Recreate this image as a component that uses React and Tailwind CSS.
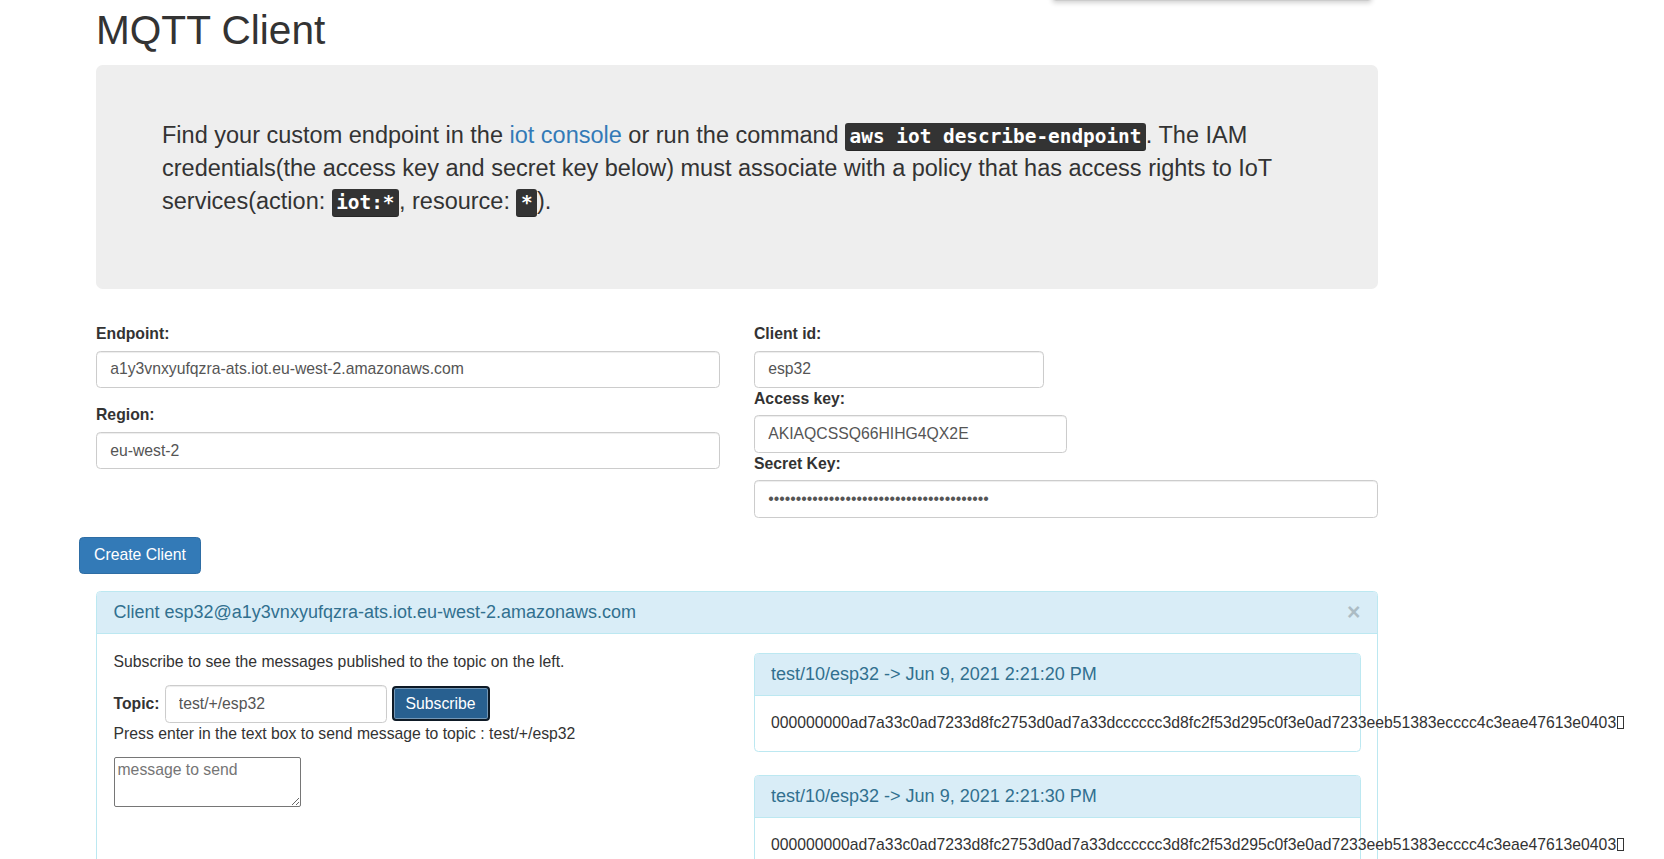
import React from 'react';

const PAYLOAD =
  '000000000ad7a33c0ad7233d8fc2753d0ad7a33dcccccc3d8fc2f53d295c0f3e0ad7233eeb51383ecccc4c3eae47613e0403';

const messages = [
  { id: 1, topic: 'test/10/esp32', time: 'Jun 9, 2021 2:21:20 PM', payload: PAYLOAD },
  { id: 2, topic: 'test/10/esp32', time: 'Jun 9, 2021 2:21:30 PM', payload: PAYLOAD },
];

function Kbd({ children }) {
  return (
    <kbd className="inline-block rounded-[3px] bg-[#333] px-[4.4px] py-[3px] font-['DejaVu_Sans_Mono',monospace] text-[19.4px] leading-[22px] font-bold text-white shadow-[inset_0_-1px_0_rgba(0,0,0,0.25)]">
      {children}
    </kbd>
  );
}

function Label({ children }) {
  return <label className="mb-[5.5px] block font-bold">{children}</label>;
}

function Input({ value, type = 'text', className = '' }) {
  return (
    <input
      type={type}
      defaultValue={value}
      className={`block h-[37.4px] rounded-[4.4px] border border-[#ccc] bg-white px-[13.2px] text-[#555] shadow-[inset_0_1px_1px_rgba(0,0,0,0.075)] outline-none ${className}`}
    />
  );
}

function MessagePanel({ msg }) {
  return (
    <div className="mb-[23px] rounded-[4.4px] border border-[#bce8f1]">
      <div className="flex h-[42px] items-center rounded-t-[3.4px] border-b border-[#bce8f1] bg-[#d9edf7] px-[16.5px] text-[18px] text-[#31708f]">
        {msg.topic} -&gt; {msg.time}
      </div>
      <div className="whitespace-nowrap px-[16.5px] py-[16.5px]">
        {msg.payload}
        <span className="ml-[1px] inline-block h-[13px] w-[7px] border border-[#333] align-[-1px]" />
      </div>
    </div>
  );
}

export default function App() {
  return (
    <div className="relative min-h-screen overflow-x-hidden bg-white font-['Liberation_Sans',Arial,sans-serif] text-[15.75px] leading-[22px] text-[#333]">
      <div className="absolute left-[1052px] top-[-40px] h-[41px] w-[320px] rounded-[4px] border border-[#ccc] bg-white shadow-[0_2px_5px_rgba(0,0,0,0.18)]" />

      <div className="ml-[96px] w-[1282px] pt-[8px] pb-[40px]">
        <h1 className="mb-[13px] text-[40.6px] font-normal leading-[44px]">MQTT Client</h1>

        <div className="mb-[34px] rounded-[6.6px] bg-[#eee] px-[66px] pt-[54px] pb-[71px]">
          <p className="text-[23.5px] leading-[33px]">
            Find your custom endpoint in the{' '}
            <a href="#" className="text-[#337ab7]">iot console</a> or run the command{' '}
            <Kbd>aws iot describe-endpoint</Kbd>. The IAM credentials(the access key and secret key
            below) must associate with a policy that has access rights to IoT services(action:{' '}
            <Kbd>iot:*</Kbd>, resource: <Kbd>*</Kbd>).
          </p>
        </div>

        <div className="grid grid-cols-2 gap-x-[34px]">
          <div>
            <Label>Endpoint:</Label>
            <Input value="a1y3vnxyufqzra-ats.iot.eu-west-2.amazonaws.com" className="mb-[16.5px] w-full" />
            <Label>Region:</Label>
            <Input value="eu-west-2" className="w-full" />
          </div>
          <div>
            <Label>Client id:</Label>
            <Input value="esp32" className="w-[290px]" />
            <Label>Access key:</Label>
            <Input value="AKIAQCSSQ66HIHG4QX2E" className="w-[313px]" />
            <Label>Secret Key:</Label>
            <Input type="password" value="xxxxxxxxxxxxxxxxxxxxxxxxxxxxxxxxxxxxxxxx" className="w-full" />
          </div>
        </div>

        <button className="ml-[-17px] mt-[19px] block h-[37.4px] w-[122px] rounded-[4.4px] border border-[#2e6da4] bg-[#337ab7] text-white">
          Create Client
        </button>

        <div className="mt-[17px] rounded-[4.4px] border border-[#bce8f1]">
          <div className="flex h-[42px] items-center justify-between rounded-t-[3.4px] border-b border-[#bce8f1] bg-[#d9edf7] px-[16.5px] text-[#31708f]">
            <h3 className="text-[18px] leading-[19.4px]">
              Client esp32@a1y3vnxyufqzra-ats.iot.eu-west-2.amazonaws.com
            </h3>
            <button className="text-[23.1px] font-bold leading-none text-black opacity-20">×</button>
          </div>

          <div className="grid grid-cols-2 gap-x-[33px] p-[16.5px]">
            <div>
              <p className="mb-[12px]">Subscribe to see the messages published to the topic on the left.</p>
              <div className="flex items-center">
                <label className="mr-[5px] font-bold">Topic:</label>
                <Input value="test/+/esp32" className="h-[38px] w-[222px]" />
                <button className="ml-[5px] h-[35px] w-[98px] rounded-[4px] border-2 border-[#0e1a26] bg-[#286090] text-white shadow-[inset_0_0_0_1px_rgba(255,255,255,0.35)]">
                  Subscribe
                </button>
              </div>
              <p className="mb-[12px]">Press enter in the text box to send message to topic : test/+/esp32</p>
              <textarea
                placeholder="message to send"
                className="block h-[50px] w-[187px] resize rounded-[2px] border border-[#767676] bg-white px-[3px] py-[1px] outline-none placeholder:text-[#757575]"
              />
            </div>
            <div className="pt-[2px]">
              {messages.map((m) => (
                <MessagePanel key={m.id} msg={m} />
              ))}
            </div>
          </div>
        </div>
      </div>
    </div>
  );
}
